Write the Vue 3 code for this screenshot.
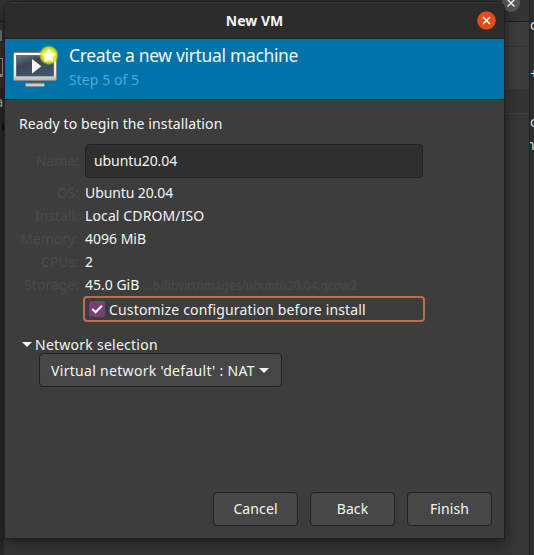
<script setup>
const details = [
  { label: 'OS:', value: 'Ubuntu 20.04', cls: 'os' },
  { label: 'Install:', value: 'Local CDROM/ISO', cls: 'install' },
  { label: 'Memory:', value: '4096 MiB', cls: 'memory' },
  { label: 'CPUs:', value: '2', cls: 'cpus' },
  { label: 'Storage:', value: '45.0 GiB', cls: 'storage', path: '…b/libvirt/images/ubuntu20.04.qcow2' },
]
const actions = ['Cancel', 'Back', 'Finish']
</script>

<template>
  <div class="desktop">
    <div class="behind-left">
      <span class="bit bit-a">l</span>
      <span class="bit-monitor"></span>
      <span class="bit bit-b">a</span>
      <span class="bit-dot"></span>
    </div>
    <div class="behind-manager">
      <svg class="behind-close" viewBox="0 0 18 18"><circle cx="9" cy="9" r="9" fill="#585858" /><path d="M5.500 5.500l7 7M12.500 5.500l-7 7" stroke="#eee" stroke-width="1.500" /></svg>
    </div>
    <div class="behind-editor">
      <span class="ed ed1">c</span><span class="ed ed2">+</span><span class="ed ed3">c</span><span class="ed ed4">n</span>
    </div>

    <main class="window">
      <header class="titlebar">
        <h1>New VM</h1>
        <button class="close" aria-label="Close">
          <svg viewBox="0 0 19 19"><circle cx="9.500" cy="9.500" r="9.300" fill="#e44d18" /><path d="M6 6l7 7M13 6l-7 7" stroke="#fff" stroke-width="1.500" /></svg>
        </button>
      </header>
      <section class="banner">
        <svg class="monitor" viewBox="0 0 48 44">
          <defs>
            <linearGradient id="bezel" x1="0" y1="0" x2="0" y2="1"><stop offset="0" stop-color="#fff" /><stop offset=".8" stop-color="#e4e4e4" /><stop offset="1" stop-color="#b4b4b4" /></linearGradient>
            <linearGradient id="screen" x1="0" y1="0" x2=".7" y2="1"><stop offset="0" stop-color="#6a7888" /><stop offset=".4" stop-color="#394757" /><stop offset="1" stop-color="#465469" /></linearGradient>
            <radialGradient id="glow"><stop offset="0" stop-color="#ffff60" /><stop offset=".6" stop-color="#e8ee20" /><stop offset=".8" stop-color="#d4dc22" stop-opacity=".85" /><stop offset="1" stop-color="#b8d030" stop-opacity="0" /></radialGradient>
          </defs>
          <path d="M18 35h11l1 4H17z" fill="#555" />
          <rect x="13.500" y="38.300" width="19" height="3.200" rx="1" fill="#ccc" stroke="#858585" stroke-width=".7" />
          <rect x="1.500" y="7.500" width="43" height="28" rx="1.500" fill="url(#bezel)" stroke="#888" />
          <rect x="4.500" y="10.500" width="37" height="20.500" fill="url(#screen)" stroke="#566070" stroke-width=".8" />
          <path d="M20 14v14.500l9.300-7.250z" fill="#fff" />
          <circle cx="36.800" cy="10.200" r="10" fill="url(#glow)" />
          <path d="M36.800 4.200l2.100 4 4.400.7-3.200 3.200.7 4.500-4-2.100-4 2.100.7-4.500-3.200-3.200 4.400-.7z" fill="#fff" stroke="#fff" stroke-width=".6" />
        </svg>
        <div>
          <h2>Create a new virtual machine</h2>
          <p class="step">Step 5 of 5</p>
        </div>
      </section>
      <section class="content">
        <p class="ready">Ready to begin the installation</p>
        <div class="form">
          <span class="label name-label">Name:</span>
          <div class="entry"><span>ubuntu20.04</span></div>
          <template v-for="row in details" :key="row.label">
            <span class="label">{{ row.label }}</span>
            <span class="value"><span :class="row.cls">{{ row.value }}</span><span v-if="row.path" class="path">{{ row.path }}</span></span>
          </template>
          <div class="check-row">
            <svg class="check" viewBox="0 0 16 16"><rect width="16" height="16" rx="2.500" fill="#7a3f73" /><path d="M3.300 8l3.300 3.300 6.300-6.500" fill="none" stroke="#fff" stroke-width="2" /></svg>
            <span class="customize">Customize configuration before install</span>
          </div>
        </div>
        <div class="expander">
          <i class="arrow"></i><span>Network selection</span>
        </div>
        <button class="combo"><span>Virtual network 'default' : NAT</span><i class="arrow"></i></button>
        <footer>
          <button v-for="action in actions" :key="action" :class="action.toLowerCase()">{{ action }}</button>
        </footer>
      </section>
    </main>
  </div>
</template>

<style>
body { margin: 0; background: #363636; }
</style>

<style scoped>
* { box-sizing: border-box; }
.desktop {
  position: relative; width: 534px; height: 555px; overflow: hidden;
  background: #353535; padding: 1px 0 0 4px; color: #f4f4f4;
  font: 14px/23px "Noto Sans", sans-serif;
}
h1, h2, p { margin: 0; font-weight: 400; }
button { font: inherit; color: inherit; padding: 0; }
.behind-left { position: absolute; left: 0; top: 0; width: 4px; height: 555px; background: linear-gradient(#323232 21px, #202020 21px, #202020 22px, #343434 22px, #303030 88px, #292929 88px); overflow: hidden; }
.bit { position: absolute; color: #aaa; font-size: 15px; }
.bit-a { left: -1px; top: 24px; color: #7f929a; }
.bit-b { left: -5px; top: 90px; }
.bit-monitor { position: absolute; left: 0; top: 58px; width: 3px; height: 19px; background: #263030; border: solid #999; border-width: 1px 1px 3px 0; }
.bit-dot { position: absolute; left: 2px; top: 123px; width: 4px; height: 8px; border-radius: 4px; background: #140e0c; }
.behind-manager { position: absolute; left: 504px; top: 0; width: 25px; height: 555px; background: linear-gradient(#353535 21px, #202020 21px, #202020 22px, #3c3c3c 22px, #3c3c3c 46px, #333 46px, #333 47px, #3c3c3c 47px, #3c3c3c 89px, #343434 89px, #343434 113px, #3e3e3e 113px, #3e3e3e 114px, #363636 114px); }
.behind-close { position: absolute; left: -2px; top: -6px; width: 18px; height: 18px; }
.behind-editor { position: absolute; left: 529px; top: 0; width: 5px; height: 555px; overflow: hidden; background: #2c2c2c; border-left: 1px solid #202020; }
.ed { position: absolute; left: 0; color: #ddd; }
.ed1 { top: 13px; } .ed2 { top: 62px; left: 0; } .ed3 { top: 110px; } .ed4 { top: 133px; left: -4px; }
.window {
  position: relative; display: flex; flex-direction: column; width: 501px; height: 538px;
  border: 1px solid #202020; border-radius: 8px 8px 0 0; background: #3d3d3d;
  box-shadow: 0 3px 14px rgba(0,0,0,.5); overflow: hidden;
}
.titlebar { display: grid; grid-template-columns: 40px 1fr 40px; align-items: center; height: 37px; flex: none; background: #2c2c2c; border-top: 1px solid #383838; border-bottom: 1px solid #202020; padding-bottom: 1px; }
h1 { grid-column: 2; text-align: center; font-size: 14px; font-weight: 700; }
.close { width: 19px; height: 19px; margin-left: 12.500px; border: 0; background: none; }
.close svg { display: block; width: 19px; height: 19px; }
.banner { display: flex; flex: none; height: 61px; background: #0073a9; border-bottom: 1px solid #202020; padding: 6px 0 0 7px; }
.monitor { width: 48px; height: 44px; margin-right: 9px; flex: none; }
h2 { font-size: 17.500px; line-height: 22px; margin-top: -1px; letter-spacing: -.34px; white-space: nowrap; }
.step { color: #4ba9dd; line-height: 23px; margin-top: 2px; letter-spacing: .06px; }
.content { flex: 1; display: flex; flex-direction: column; padding: 12px 12px 12px 14px; }
.ready { white-space: nowrap; letter-spacing: .11px; }
.form { display: grid; grid-template-columns: 60px 340px; column-gap: 6px; margin-top: 9px; grid-template-rows: 37px repeat(5, 23px) 27px; }
.label { color: #4a4a4a; text-align: right; white-space: nowrap; }
.name-label { line-height: 34px; }
.entry { width: 338px; height: 34px; border: 1px solid #222; border-radius: 4px; background: #2f2f2f; padding-left: 8px; line-height: 32px; letter-spacing: -.09px; }
.value { white-space: nowrap; }
.os { letter-spacing: -.1px; }
.install { letter-spacing: .12px; }
.path { color: #4a4a4a; font-size: 12px; margin-left: 4px; letter-spacing: -.03px; }
.check-row { grid-column: 2; display: flex; align-items: center; width: 342px; height: 26px; margin-left: -2px; border: 2px solid #ba6d50; border-radius: 4px; padding-left: 4px; white-space: nowrap; }
.check { width: 16px; height: 16px; margin-right: 4px; flex: none; }
.customize { letter-spacing: .16px; }
.arrow { width: 0; height: 0; border: 5px solid transparent; border-top-color: #f4f4f4; border-bottom: 0; flex: none; }
.expander { display: flex; align-items: center; gap: 3px; margin: 10px 0 0 3px; height: 23px; letter-spacing: .25px; }
.combo { display: flex; align-items: center; gap: 4px; width: 243px; height: 34px; margin: -3px 0 0 20px; padding-left: 11px; border: 1px solid #222; border-radius: 4px; background: #474747; white-space: nowrap; letter-spacing: .31px; }
footer { display: flex; justify-content: flex-end; gap: 12px; margin-top: auto; }
footer button { width: 85px; height: 34px; border: 1px solid #222; border-radius: 4px; background: #474747; text-align: center; padding-bottom: 1px; letter-spacing: .1px; }
</style>
